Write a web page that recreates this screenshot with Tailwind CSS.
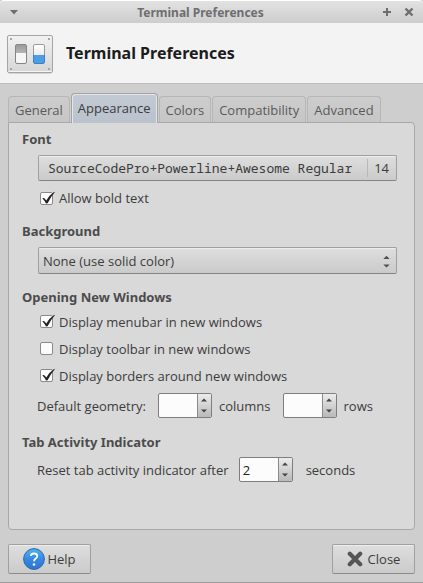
<!DOCTYPE html>
<html lang="en">
<head>
<meta charset="utf-8">
<meta name="viewport" content="width=device-width, initial-scale=1">
<title>Terminal Preferences</title>
<script src="https://cdn.jsdelivr.net/npm/@tailwindcss/browser@4"></script>
</head>
<body class="min-h-screen flex flex-col bg-[#cecece] font-['Open_Sans','Noto_Sans',sans-serif] text-[13px] leading-[18px] text-[#3c3c3c] border-b border-[#9c9c9c]">

<div class="relative flex h-[23px] items-center justify-between rounded-t-sm border-t border-white bg-linear-to-b from-[#e2e2e2] to-[#cdcdcd] px-[9px] text-[#6e6e6e]">
  <button type="button" aria-label="Window menu" class="flex">
    <svg class="size-[10px]" viewBox="0 0 10 10" fill="currentColor"><path d="M1 3h8L5 7.5z"/></svg>
  </button>
  <span class="absolute inset-x-0 text-center font-['Noto_Sans'] text-[12px] font-bold pointer-events-none pt-0.5 pr-[22px]">Terminal Preferences</span>
  <div class="flex gap-3">
    <button type="button" aria-label="Maximize" class="flex">
      <svg class="size-[10px]" viewBox="0 0 10 10" stroke="currentColor" stroke-width="2"><path d="M5 1v8M1 5h8"/></svg>
    </button>
    <button type="button" aria-label="Close window" class="flex">
      <svg class="size-[10px]" viewBox="0 0 10 10" stroke="currentColor" stroke-width="2.4"><path d="M1.5 1.5l7 7M8.5 1.5l-7 7"/></svg>
    </button>
  </div>
</div>

<header class="flex h-[61px] items-center gap-[13px] border-b border-[#bcbcbc] bg-[#f3f3f3] px-[7px] pb-1 pt-1">
  <svg class="size-[46px] shrink-0" viewBox="0 0 46 46" aria-hidden="true">
    <defs>
      <linearGradient id="plate" x1="0" y1="0" x2="0" y2="1"><stop offset="0" stop-color="#f2f2f2"/><stop offset="1" stop-color="#d6d6d6"/></linearGradient>
      <linearGradient id="dark" x1="0" y1="0" x2="0" y2="1"><stop offset="0" stop-color="#9b9b9b"/><stop offset="1" stop-color="#b4b4b4"/></linearGradient>
      <linearGradient id="light" x1="0" y1="0" x2="0" y2="1"><stop offset="0" stop-color="#fff"/><stop offset="1" stop-color="#dcdcdc"/></linearGradient>
    </defs>
    <rect x="1" y="38" width="44" height="6" rx="2" fill="#000" opacity=".12"/>
    <rect x=".5" y="5.500" width="45" height="37" rx="1.500" fill="url(#plate)" stroke="#a5a5a5"/>
    <path d="M1.500 41.500h43" stroke="#f5f5f5"/>
    <g fill="#a6a6a6"><rect x="3" y="8" width="2" height="2"/><rect x="41" y="8" width="2" height="2"/><rect x="3" y="38" width="2" height="2"/><rect x="41" y="38" width="2" height="2"/></g>
    <g transform="translate(0 1)">
      <rect x="8.500" y="13.500" width="11" height="19" rx="1.500" fill="#f6f6f6"/>
      <path d="M9 14h10v8H9z" fill="url(#dark)"/>
      <rect x="8.500" y="13.500" width="11" height="19" rx="1.500" fill="none" stroke="#858585"/>
      <rect x="26.500" y="13.500" width="11" height="19" rx="1.500" fill="url(#light)"/>
      <path d="M27 24h10v8H27z" fill="#4d9ce8"/>
      <path d="M26.500 24V15q0-1.500 1.500-1.500h8q1.500 0 1.500 1.500v9" fill="none" stroke="#9a9a9a"/>
      <path d="M26.500 24v7q0 1.500 1.500 1.500h8q1.500 0 1.500-1.500v-7" fill="none" stroke="#3f7fc0"/>
    </g>
  </svg>
  <h1 class="font-['Noto_Sans'] text-[16px] leading-6 font-bold text-[#1c1c1c]">Terminal Preferences</h1>
</header>

<main class="flex flex-1 flex-col px-2 pb-2 pt-[9px]">
  <div role="tablist" class="flex items-end gap-px text-[#5a5a5a]">
    <button type="button" role="tab" class="h-[26px] rounded-t-sm border border-b-0 border-[#b6b6b6] bg-linear-to-b from-[#cdcdcd] to-[#c6c6c6] px-1.5">General</button>
    <button type="button" role="tab" aria-selected="true" class="relative -mb-px h-[30px] rounded-t-sm border border-b-0 border-[#a3a3a3] bg-linear-to-b from-[#c3cad4] to-[#b9c2cd] px-1.5 pb-0.5 text-[#3c3c3c] shadow-[inset_1px_1px_0_#e4e6e9,inset_-1px_0_0_#e4e6e9]">Appearance</button>
    <button type="button" role="tab" class="h-[26px] rounded-t-sm border border-b-0 border-[#b6b6b6] bg-linear-to-b from-[#cdcdcd] to-[#c6c6c6] px-1.5">Colors</button>
    <button type="button" role="tab" class="h-[26px] rounded-t-sm border border-b-0 border-[#b6b6b6] bg-linear-to-b from-[#cdcdcd] to-[#c6c6c6] px-1.5">Compatibility</button>
    <button type="button" role="tab" class="h-[26px] rounded-t-sm border border-b-0 border-[#b6b6b6] bg-linear-to-b from-[#cdcdcd] to-[#c6c6c6] px-1.5">Advanced</button>
  </div>

  <div role="tabpanel" class="flex flex-1 flex-col gap-[15px] rounded-b-sm rounded-tr-sm border border-[#a8a8a8] bg-[#d9d9d9] px-[13px] pt-[7px]">
    <section>
      <h2 class="font-['Noto_Sans'] font-bold text-[#4c4c4c]">Font</h2>
      <div class="ml-4 mr-1 mt-[7px]">
        <button type="button" class="flex h-[26px] w-full items-center justify-between rounded-xs border border-[#a0a0a0] border-b-[#858585] bg-linear-to-b from-[#dedede] to-[#cbcbcb] pl-[9px] pr-[7px] shadow-[inset_0_1px_0_#ededed]">
          <span class="whitespace-nowrap font-['Noto_Sans_Mono','Liberation_Mono',monospace] text-[13px]">SourceCodePro+Powerline+Awesome Regular</span>
          <span class="border-l border-[#b8b8b8] pl-1.5">14</span>
        </button>
      </div>
      <label class="ml-[18px] mt-2 flex items-center gap-1.5">
        <span class="relative flex">
          <input type="checkbox" checked class="peer size-[13px] appearance-none rounded-xs border border-[#8a8a8a] bg-[#fcfcfc]">
          <svg class="pointer-events-none absolute -top-px left-0 hidden size-[15px] peer-checked:block" viewBox="0 0 15 15" fill="#222"><path d="M2.300 7.200Q4 6.600 4.600 7.400L6.300 9.600Q9.500 4 14.300.8L14.800 1.200Q10.500 6 7.600 12.300L6 12.500Q4.600 9.500 2.300 7.200z"/></svg>
        </span>
        Allow bold text
      </label>
    </section>

    <section>
      <h2 class="font-['Noto_Sans'] font-bold text-[#4c4c4c]"><label for="background">Background</label></h2>
      <div class="relative ml-4 mr-1 mt-[7px]">
        <select id="background" class="block h-[27px] w-full appearance-none rounded-xs border border-[#a0a0a0] border-b-[#858585] bg-linear-to-b from-[#dedede] to-[#cbcbcb] px-1 shadow-[inset_0_1px_0_#ededed]">
          <option>None (use solid color)</option>
        </select>
        <svg class="pointer-events-none absolute right-[7px] top-2 h-[13px] w-[7px]" viewBox="0 0 7 13" fill="#505050"><path d="M.3 4L3.500.8 6.700 4zM.3 9.500h6.400L3.500 12.500z"/></svg>
      </div>
    </section>

    <section class="-mt-px">
      <h2 class="font-['Noto_Sans'] font-bold text-[#4c4c4c]">Opening New Windows</h2>
      <div class="ml-[18px] mt-0.5 flex flex-col">
        <label class="flex h-[27px] items-center gap-1.5">
          <span class="relative flex">
            <input type="checkbox" checked class="peer size-[13px] appearance-none rounded-xs border border-[#8a8a8a] bg-[#fcfcfc]">
            <svg class="pointer-events-none absolute -top-px left-0 hidden size-[15px] peer-checked:block" viewBox="0 0 15 15" fill="#222"><path d="M2.300 7.200Q4 6.600 4.600 7.400L6.300 9.600Q9.500 4 14.300.8L14.800 1.200Q10.500 6 7.600 12.300L6 12.500Q4.600 9.500 2.300 7.200z"/></svg>
          </span>
          Display menubar in new windows
        </label>
        <label class="flex h-[27px] items-center gap-1.5">
          <span class="relative flex">
            <input type="checkbox" class="peer size-[13px] appearance-none rounded-xs border border-[#8a8a8a] bg-[#fcfcfc]">
            <svg class="pointer-events-none absolute -top-px left-0 hidden size-[15px] peer-checked:block" viewBox="0 0 15 15" fill="#222"><path d="M2.300 7.200Q4 6.600 4.600 7.400L6.300 9.600Q9.500 4 14.300.8L14.800 1.200Q10.500 6 7.600 12.300L6 12.500Q4.600 9.500 2.300 7.200z"/></svg>
          </span>
          Display toolbar in new windows
        </label>
        <label class="flex h-[27px] items-center gap-1.5">
          <span class="relative flex">
            <input type="checkbox" checked class="peer size-[13px] appearance-none rounded-xs border border-[#8a8a8a] bg-[#fcfcfc]">
            <svg class="pointer-events-none absolute -top-px left-0 hidden size-[15px] peer-checked:block" viewBox="0 0 15 15" fill="#222"><path d="M2.300 7.200Q4 6.600 4.600 7.400L6.300 9.600Q9.500 4 14.300.8L14.800 1.200Q10.500 6 7.600 12.300L6 12.500Q4.600 9.500 2.300 7.200z"/></svg>
          </span>
          Display borders around new windows
        </label>
      </div>
      <div class="ml-[15px] mt-1 flex items-center">
        <label for="columns">Default geometry:</label>
        <div class="ml-3 mr-[7px] flex h-[25px] w-[54px] overflow-hidden rounded-xs border border-[#7e7e7e] bg-[#fcfcfc]">
          <input id="columns" type="text" inputmode="numeric" class="min-w-0 flex-1 px-[3px] text-[#222]">
          <div class="flex w-[14px] flex-col border-l border-[#8a8a8a] bg-linear-to-b from-[#ececec] to-[#b9b9b9]">
            <button type="button" aria-label="More columns" class="flex flex-1 items-center justify-center"><svg class="h-[4px] w-[6px]" viewBox="0 0 6 4" fill="#444"><path d="M0 3.500L3 .5l3 3z"/></svg></button>
            <button type="button" aria-label="Fewer columns" class="flex flex-1 items-center justify-center"><svg class="h-[4px] w-[6px]" viewBox="0 0 6 4" fill="#444"><path d="M0 .5l3 3 3-3z"/></svg></button>
          </div>
        </div>
        <span>columns</span>
        <div class="ml-3 mr-[7px] flex h-[25px] w-[54px] overflow-hidden rounded-xs border border-[#7e7e7e] bg-[#fcfcfc]">
          <input id="rows" type="text" inputmode="numeric" class="min-w-0 flex-1 px-[3px] text-[#222]">
          <div class="flex w-[14px] flex-col border-l border-[#8a8a8a] bg-linear-to-b from-[#ececec] to-[#b9b9b9]">
            <button type="button" aria-label="More rows" class="flex flex-1 items-center justify-center"><svg class="h-[4px] w-[6px]" viewBox="0 0 6 4" fill="#444"><path d="M0 3.500L3 .5l3 3z"/></svg></button>
            <button type="button" aria-label="Fewer rows" class="flex flex-1 items-center justify-center"><svg class="h-[4px] w-[6px]" viewBox="0 0 6 4" fill="#444"><path d="M0 .5l3 3 3-3z"/></svg></button>
          </div>
        </div>
        <label for="rows">rows</label>
      </div>
    </section>

    <section>
      <h2 class="font-['Noto_Sans'] font-bold text-[#4c4c4c]">Tab Activity Indicator</h2>
      <div class="ml-[15px] mt-1.5 flex items-center">
        <label for="reset">Reset tab activity indicator after</label>
        <div class="ml-2.5 mr-[13px] flex h-[25px] w-[54px] overflow-hidden rounded-xs border border-[#7e7e7e] bg-[#fcfcfc]">
          <input id="reset" type="text" inputmode="numeric" value="2" class="min-w-0 flex-1 px-[3px] text-[#222]">
          <div class="flex w-[14px] flex-col border-l border-[#8a8a8a] bg-linear-to-b from-[#ececec] to-[#b9b9b9]">
            <button type="button" aria-label="More seconds" class="flex flex-1 items-center justify-center"><svg class="h-[4px] w-[6px]" viewBox="0 0 6 4" fill="#444"><path d="M0 3.500L3 .5l3 3z"/></svg></button>
            <button type="button" aria-label="Fewer seconds" class="flex flex-1 items-center justify-center"><svg class="h-[4px] w-[6px]" viewBox="0 0 6 4" fill="#444"><path d="M0 .5l3 3 3-3z"/></svg></button>
          </div>
        </div>
        <span>seconds</span>
      </div>
    </section>
  </div>

  <footer class="mt-[14px] flex justify-between">
    <button type="button" class="flex h-[30px] w-[83px] items-center justify-center gap-0.5 rounded-xs border border-[#a0a0a0] border-b-[#8a8a8a] bg-linear-to-b from-[#dedede] to-[#cbcbcb] shadow-[inset_0_1px_0_#ededed]">
      <svg class="size-[22px]" viewBox="0 0 22 22" aria-hidden="true">
        <defs><linearGradient id="ball" x1="0" y1="0" x2="0" y2="1"><stop offset="0" stop-color="#4fb4ee"/><stop offset=".5" stop-color="#3689e6"/><stop offset="1" stop-color="#2f74cc"/></linearGradient></defs>
        <circle cx="11" cy="11" r="10.400" fill="url(#ball)" stroke="#2b66a8"/>
        <path d="M7.800 8q.2-2.500 3.300-2.500 3.200 0 3.200 2.500 0 1.500-1.600 2.500-1.700 1-1.700 2.800" fill="none" stroke="#fff" stroke-width="1.800"/>
        <circle cx="11" cy="16.500" r="1.300" fill="#fff"/>
      </svg>
      Help
    </button>
    <button type="button" class="flex h-[30px] w-[83px] items-center justify-center gap-[5px] rounded-xs border border-[#a0a0a0] border-b-[#8a8a8a] bg-linear-to-b from-[#dedede] to-[#cbcbcb] shadow-[inset_0_1px_0_#ededed]">
      <svg class="size-4" viewBox="0 0 16 16" aria-hidden="true"><path d="M2.800 2.800l10.400 10.400M13.200 2.800L2.800 13.200" stroke="#555" stroke-width="4.200" stroke-linecap="round"/></svg>
      Close
    </button>
  </footer>
</main>
</body>
</html>
